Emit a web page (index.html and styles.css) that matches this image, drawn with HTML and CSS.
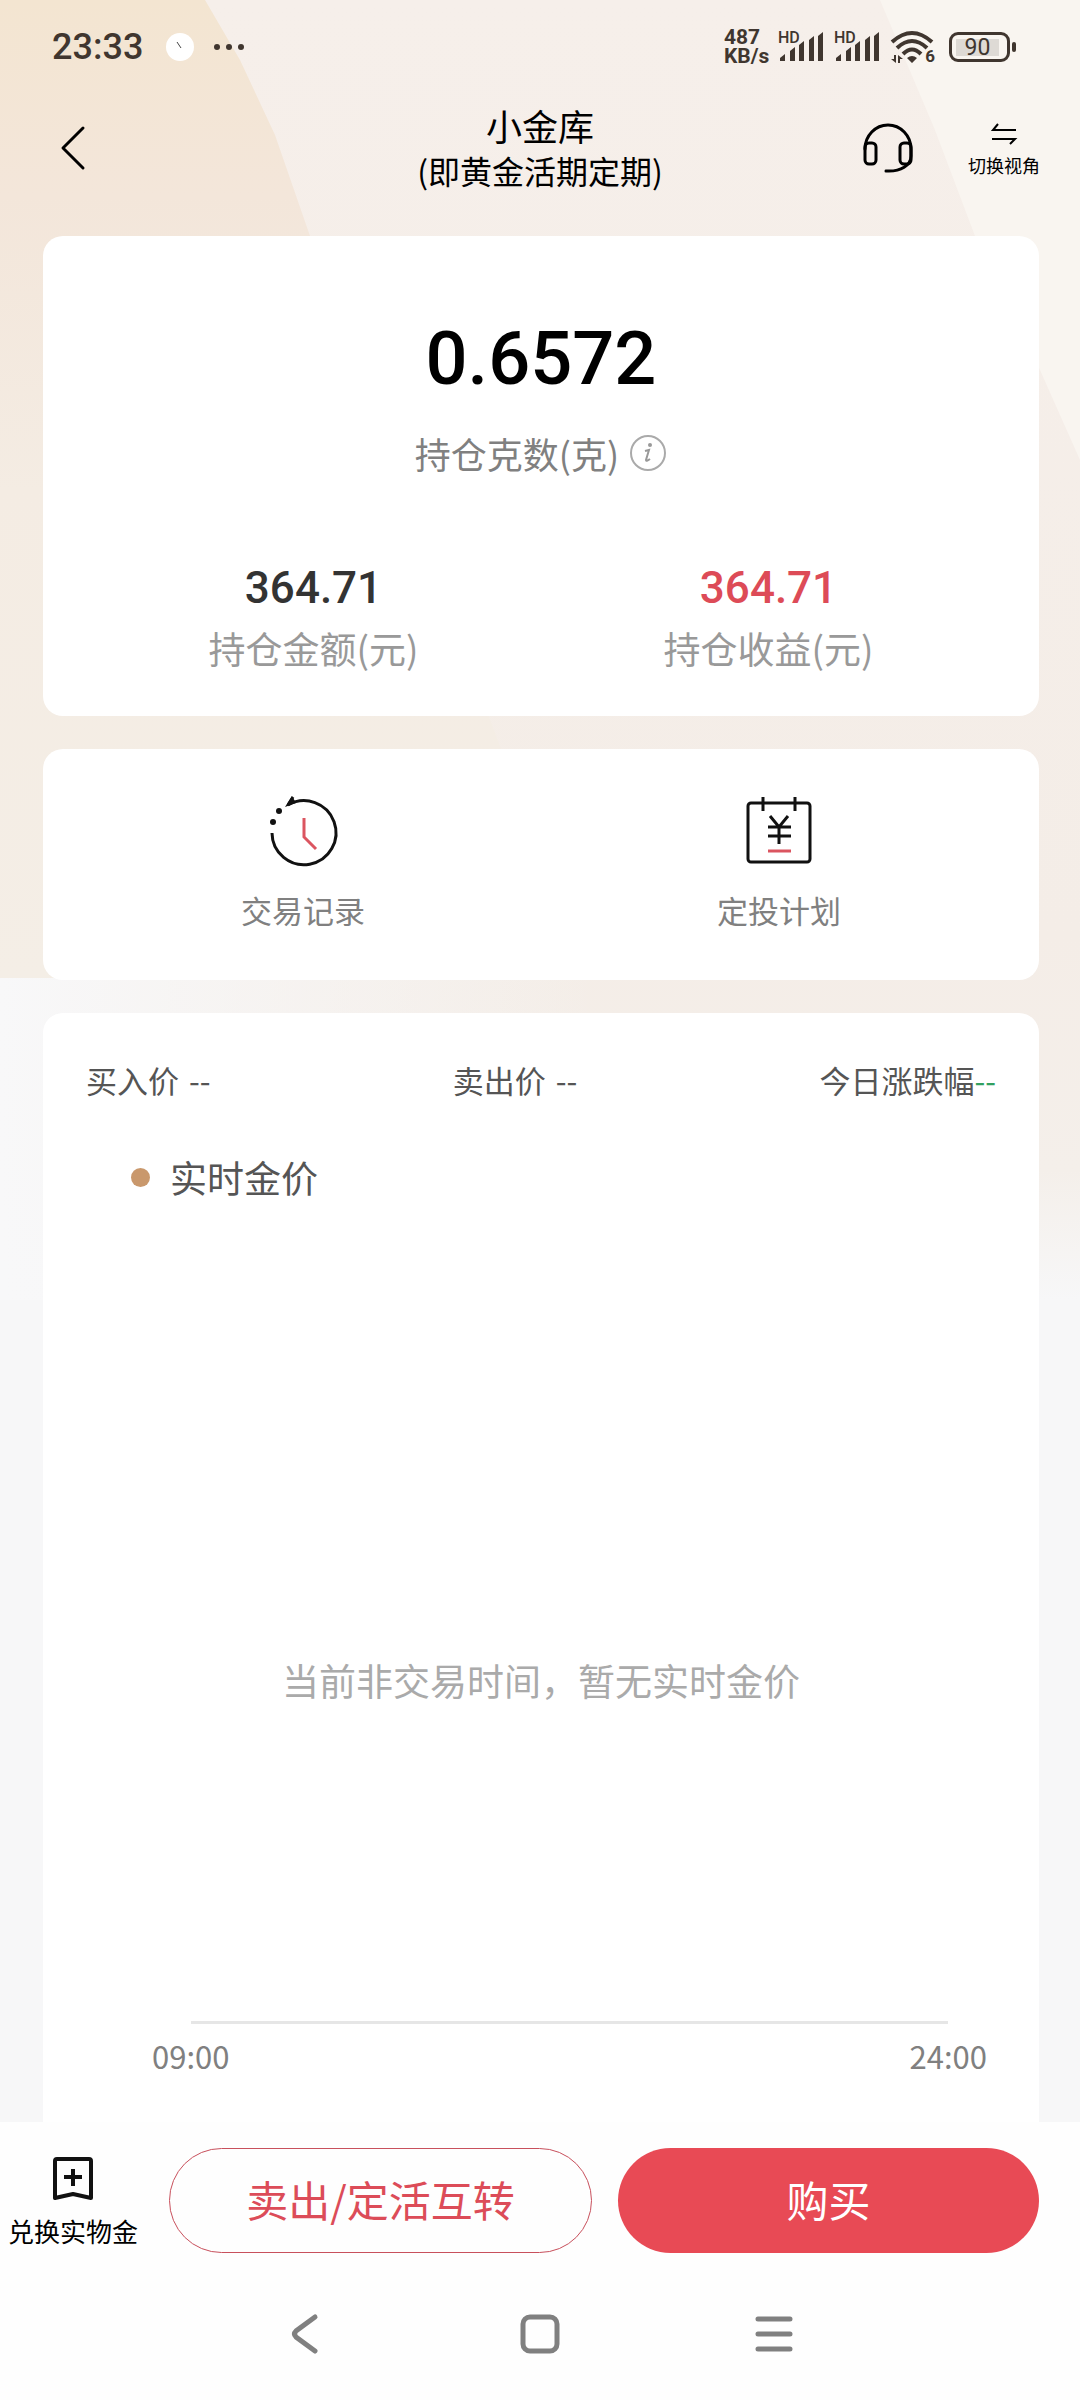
FILE: index.html
```html
<!DOCTYPE html>
<html lang="zh-CN">
<head>
<meta charset="utf-8">
<meta name="viewport" content="width=device-width, initial-scale=1">
<title>小金库</title>
<link rel="stylesheet" href="styles.css">
</head>
<body>
<div class="app">
  <svg class="backdrop" viewBox="0 0 1080 1300" preserveAspectRatio="none" aria-hidden="true">
    <defs>
      <linearGradient id="base" x1="0" y1="0" x2="0" y2="1">
        <stop offset="0" stop-color="#f6efea"/><stop offset=".72" stop-color="#f4ede7"/><stop offset=".9" stop-color="#f4efea"/><stop offset="1" stop-color="#f7f7f8"/>
      </linearGradient>
      <linearGradient id="warm" x1="0" y1="0" x2="0" y2="1">
        <stop offset="0" stop-color="#f3e5d1"/><stop offset=".2" stop-color="#f3e6da"/><stop offset=".5" stop-color="#f4ece3"/><stop offset="1" stop-color="#f4eee6"/>
      </linearGradient>
      <linearGradient id="mist" x1="0" y1="0" x2="1" y2="0">
        <stop offset="0" stop-color="#f8f8f9"/><stop offset="1" stop-color="#f8f8f9" stop-opacity="0"/>
      </linearGradient>
    </defs>
    <rect width="1080" height="1300" fill="url(#base)"/>
    <path d="M0 0H205L240 60L275 135L310 236L520 800V980H0Z" fill="url(#warm)"/>
    <path d="M880 0H1080V460L1040 370L975 236L935 130Z" fill="#f9f5f0"/>
    <rect y="978" width="600" height="322" fill="url(#mist)"/>
  </svg>

  <div class="status">
    <time class="clock">23:33</time>
    <svg class="status-left" width="80" height="30" viewBox="0 0 80 30" aria-hidden="true">
      <circle cx="15" cy="15" r="14" fill="#fff"/><path d="M12 10l4 6" stroke="#444" stroke-width="1"/>
      <g fill="#40362f"><circle cx="52" cy="15" r="3"/><circle cx="64" cy="15" r="3"/><circle cx="76" cy="15" r="3"/></g>
    </svg>
    <div class="speed">487<br>KB/s</div>
    <div class="signal"><span class="hd">HD</span>
      <svg width="46" height="30" viewBox="0 0 46 30" aria-hidden="true"><path d="M1 29v-3l5-4v7zM11 29V19l5-4v14zM20 29V13l5-4v20zM30 29V8l5-4v25zM39 29V4l5-4v29z"/></svg>
    </div>
    <div class="signal"><span class="hd">HD</span>
      <svg width="46" height="30" viewBox="0 0 46 30" aria-hidden="true"><path d="M1 29v-3l5-4v7zM11 29V19l5-4v14zM20 29V13l5-4v20zM30 29V8l5-4v25zM39 29V4l5-4v29z"/></svg>
    </div>
    <div class="wifi">
      <svg width="44" height="34" viewBox="0 0 44 34" aria-hidden="true">
        <g fill="none" stroke="#40362f" stroke-width="4"><path d="M2 12Q22-6 42 12"/><path d="M7 18Q22 4 37 18"/><path d="M13 24Q22 15 31 24"/></g>
        <path d="M17 28q5-4 10 0l-5 5zM4 25h2v8l-5-4h3zM8 33v-8l5 4h-3v4z" fill="#40362f"/>
      </svg>
      <span class="wifi-gen">6</span>
    </div>
    <div class="battery"><span class="battery-level">90</span></div>
  </div>

  <header class="header">
    <button class="icon-btn back" aria-label="返回"><svg width="26" height="46" viewBox="0 0 26 46"><path d="M23 3L3 23L23 43" fill="none" stroke="#000" stroke-width="3" stroke-linecap="round" stroke-linejoin="round"/></svg></button>
    <h1 class="title">小金库<span class="subtitle">(即黄金活期定期)</span></h1>
    <div class="tools">
      <button class="icon-btn" aria-label="客服"><svg width="50" height="50" viewBox="0 0 50 50"><g fill="none" stroke="#000" stroke-width="3" stroke-linecap="round"><path d="M2 26a23 24 0 0 1 46 0v7c0 9-10 16-25 15"/><rect x="2" y="20" width="11" height="21" rx="4"/><rect x="37" y="20" width="11" height="21" rx="4"/></g></svg></button>
      <button class="icon-btn switch"><svg width="26" height="22" viewBox="0 0 26 22"><path d="M25 7H2L7 1M1 16h23l-5 5" fill="none" stroke="#000" stroke-width="2"/></svg>切换视角</button>
    </div>
  </header>

  <main class="content">
    <section class="card holdings">
      <strong class="grams">0.6572</strong>
      <p class="grams-label">持仓克数(克)
        <button class="icon-btn" aria-label="说明"><svg width="38" height="38" viewBox="0 0 38 38"><circle cx="19" cy="19" r="17" fill="none" stroke="#aaa" stroke-width="2"/><circle cx="21" cy="11" r="2" fill="#999"/><path d="M16 17l4-1-3 10q0 2 4-1" fill="none" stroke="#999" stroke-width="2"/></svg></button>
      </p>
      <dl class="totals">
        <div class="total"><dt>持仓金额(元)</dt><dd>364.71</dd></div>
        <div class="total gain"><dt>持仓收益(元)</dt><dd>364.71</dd></div>
      </dl>
    </section>

    <nav class="card shortcuts">
      <a class="shortcut" href="#records"><svg width="70" height="72" viewBox="-1 0 70 72"><path d="M3 38A32 32 0 1 0 19 10L24 2" fill="none" stroke="#111" stroke-width="3"/><path d="M23 1L16 12L27 8Z" fill="#111"/><circle cx="10" cy="16" r="3" fill="#111"/><circle cx="4" cy="27" r="3" fill="#111"/><path d="M35 23V42L47 54" fill="none" stroke="#db5560" stroke-width="3"/></svg>交易记录</a>
      <a class="shortcut" href="#plans"><svg width="70" height="72" viewBox="0 0 70 72"><g fill="none" stroke="#111" stroke-width="3"><rect x="4" y="8" width="62" height="59" rx="3"/><path d="M19 2v14M51 2v14M26 21l9 11l9-11M24 32h23M24 41h23M35 32v17"/><path d="M24 56h23" stroke="#db5560"/></g></svg>定投计划</a>
    </nav>

    <section class="card market">
      <div class="prices">
        <span>买入价<span class="quote">--</span></span>
        <span>卖出价<span class="quote">--</span></span>
        <span>今日涨跌幅<span class="change">--</span></span>
      </div>
      <p class="legend">实时金价</p>
      <p class="empty">当前非交易时间，暂无实时金价</p>
      <div class="axis"><span>09:00</span><span>24:00</span></div>
    </section>
  </main>

  <footer class="footer">
    <div class="actions">
      <button class="icon-btn redeem"><svg width="42" height="46" viewBox="0 0 42 46"><path d="M5 3H37Q39 3 39 5V42L21 38L3 42V5Q3 3 5 3ZM21 13v17M12 21h18" fill="none" stroke="#111" stroke-width="4" stroke-linejoin="round"/></svg>兑换实物金</button>
      <button class="pill outline">卖出/定活互转</button>
      <button class="pill solid">购买</button>
    </div>
    <div class="sysnav">
      <button class="icon-btn" aria-label="后退"><svg width="40" height="40" viewBox="0 0 40 40"><path d="M29 3L10 17Q7 20 10 23L29 37"/></svg></button>
      <button class="icon-btn" aria-label="主屏幕"><svg width="40" height="40" viewBox="0 0 40 40"><rect x="3" y="3" width="34" height="34" rx="7"/></svg></button>
      <button class="icon-btn" aria-label="最近任务"><svg width="40" height="40" viewBox="0 0 40 40"><path d="M4 5h32M4 20h32M4 35h32"/></svg></button>
    </div>
  </footer>
</div>
</body>
</html>
```
FILE: styles.css
```css
* { box-sizing: border-box; }
body, h1, p, dl, dd { margin: 0; }
body {
  background: #f7f7f8;
  color: #000;
  font-family: "Noto Sans CJK SC", sans-serif;
  font-size: 31px;
}
button {
  margin: 0;
  padding: 0;
  border: 0;
  background: none;
  color: inherit;
  font: inherit;
}
svg { display: block; flex: none; overflow: visible; }

.app {
  position: relative;
  display: flex;
  flex-direction: column;
  min-height: 100vh;
}
.backdrop {
  position: absolute;
  z-index: -1;
  width: 100%;
  height: 1300px;
}

.status {
  display: flex;
  align-items: center;
  height: 94px;
  padding: 0 70px 0 52px;
  color: #40362f;
  font-family: Roboto, sans-serif;
  fill: #40362f;
}
.clock { font-size: 36px; font-weight: 500; }
.status-left { margin: 0 auto 0 22px; }
.speed {
  width: 54px;
  font-size: 21px;
  font-weight: 700;
  line-height: 19px;
}
.signal { position: relative; width: 56px; }
.hd {
  position: absolute;
  top: -2px;
  font-size: 16px;
  font-weight: 500;
  line-height: 16px;
}
.signal svg { margin-left: 1px; }
.wifi { position: relative; margin-right: 15px; }
.wifi-gen {
  position: absolute;
  right: -1px;
  bottom: -1px;
  font-size: 17px;
  font-weight: 700;
  line-height: 17px;
}
.battery {
  position: relative;
  width: 61px;
  height: 30px;
  padding: 4px;
  border: 3px solid #40362f;
  border-radius: 9px;
}
.battery::after {
  content: "";
  position: absolute;
  top: 7px;
  right: -9px;
  width: 4px;
  height: 10px;
  border-radius: 2px;
  background: #40362f;
}
.battery-level {
  display: block;
  width: 43px;
  background: #dedad5;
  font-size: 23px;
  line-height: 17px;
  text-align: center;
}

.icon-btn {
  display: flex;
  flex-direction: column;
  align-items: center;
}
.header {
  display: grid;
  grid-template-columns: 1fr auto 1fr;
  align-items: center;
  height: 142px;
  padding: 0 40px 34px;
}
.back { justify-self: start; margin-left: 20px; }
.title {
  font-size: 36px;
  font-weight: 400;
  line-height: 45px;
  text-align: center;
}
.subtitle { display: block; font-size: 32px; }
.tools {
  display: flex;
  gap: 55px;
  align-items: center;
  justify-self: end;
}
.switch {
  gap: 8px;
  padding-top: 4px;
  font-size: 18px;
  line-height: 24px;
}

.content {
  display: flex;
  flex: 1;
  flex-direction: column;
  gap: 33px;
  padding: 0 41px 0 43px;
}
.card { border-radius: 20px; background: #fff; }
.holdings {
  display: flex;
  flex-direction: column;
  align-items: center;
  padding: 78px 43px 36px;
}
.grams {
  font-family: Roboto, sans-serif;
  font-size: 74px;
  font-weight: 500;
  line-height: 90px;
}
.grams-label {
  display: flex;
  gap: 10px;
  align-items: center;
  margin-top: 22px;
  color: #808080;
  font-size: 36px;
  line-height: 54px;
}
.totals { display: flex; width: 100%; margin-top: 80px; }
.total {
  display: flex;
  flex: 1;
  flex-direction: column-reverse;
  text-align: center;
}
.total dt { color: #999; font-size: 37px; line-height: 64px; }
.total dd {
  color: #333;
  font-family: Roboto, sans-serif;
  font-size: 44px;
  font-weight: 500;
  line-height: 56px;
}
.gain dd { color: #dd4b57; }

.shortcuts { display: flex; padding: 46px 22px 48px; }
.shortcut {
  display: flex;
  flex: 1;
  flex-direction: column;
  gap: 21px;
  align-items: center;
  color: #808080;
  line-height: 44px;
  text-decoration: none;
}

.market {
  display: flex;
  flex: 1;
  flex-direction: column;
  padding: 43px 43px 44px;
  border-radius: 20px 20px 0 0;
  color: #555;
}
.prices { display: flex; justify-content: space-between; line-height: 48px; }
.quote { margin-left: 10px; }
.change { color: #32a05f; }
.legend {
  display: flex;
  gap: 20px;
  align-items: center;
  margin: 46px 0 0 45px;
  font-size: 37px;
  line-height: 54px;
}
.legend::before {
  content: "";
  width: 19px;
  height: 19px;
  border-radius: 50%;
  background: #c9986c;
}
.empty {
  display: flex;
  flex: 1;
  align-items: center;
  justify-content: center;
  padding-top: 134px;
  color: #aaa;
  font-size: 37px;
}
.axis {
  position: relative;
  display: flex;
  justify-content: space-between;
  margin: 0 9px 0 66px;
  padding-top: 13px;
  color: #808080;
  line-height: 44px;
}
.axis::before {
  content: "";
  position: absolute;
  top: 0;
  right: 39px;
  left: 39px;
  height: 3px;
  background: #e6e6e6;
}

.footer { background: #fefefe; }
.actions {
  display: flex;
  gap: 26px;
  align-items: center;
  padding: 26px 41px 0 8px;
}
.redeem {
  gap: 11px;
  padding-top: 4px;
  font-size: 26px;
  line-height: 36px;
}
.pill {
  flex: 1;
  height: 105px;
  padding-bottom: 4px;
  border-radius: 53px;
  font-size: 42px;
}
.outline { border: 1px solid #c8505c; color: #dc4c58; }
.solid { background: #e84a55; color: #fff; }
.redeem + .pill { margin-left: 5px; }
.sysnav {
  display: flex;
  gap: 194px;
  justify-content: center;
  padding: 61px 0 46px;
}
.sysnav svg {
  fill: none;
  stroke: #808080;
  stroke-width: 5;
  stroke-linecap: round;
}
```
